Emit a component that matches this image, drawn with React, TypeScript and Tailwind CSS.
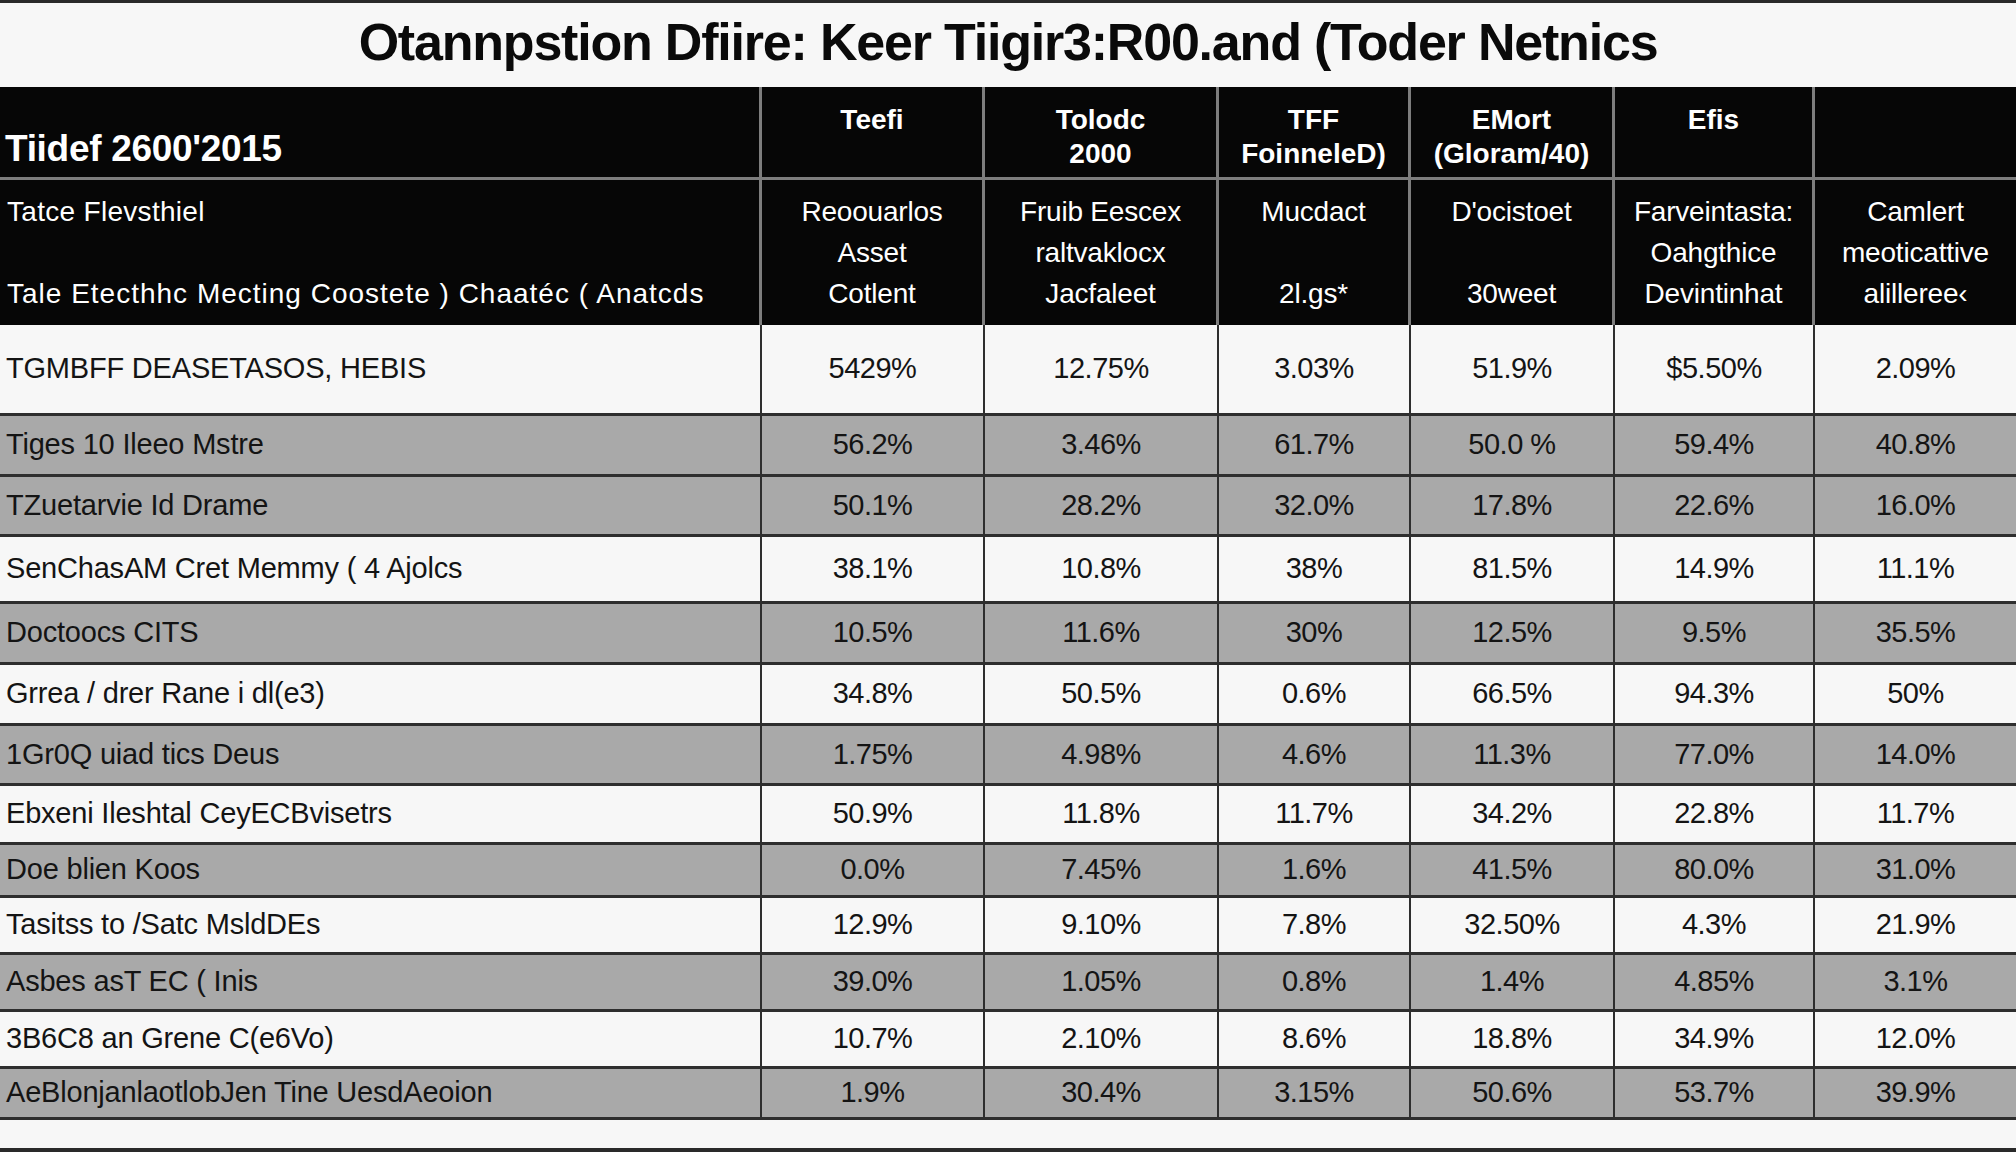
import React from "react";

const COLS = ["w-[762px]", "w-[223px]", "w-[234px]", "w-[192px]", "w-[204px]", "w-[200px]", "flex-1"];

const rows: { label: string; vals: string[]; h: string; gray: boolean }[] = [
  { label: "TGMBFF DEASETASOS, HEBIS", vals: ["5429%", "12.75%", "3.03%", "51.9%", "$5.50%", "2.09%"], h: "h-[91px]", gray: false },
  { label: "Tiges 10 Ileeo Mstre", vals: ["56.2%", "3.46%", "61.7%", "50.0 %", "59.4%", "40.8%"], h: "h-[61px]", gray: true },
  { label: "TZuetarvie Id Drame", vals: ["50.1%", "28.2%", "32.0%", "17.8%", "22.6%", "16.0%"], h: "h-[60px]", gray: true },
  { label: "SenChasAM Cret Memmy ( 4 Ajolcs", vals: ["38.1%", "10.8%", "38%", "81.5%", "14.9%", "11.1%"], h: "h-[67px]", gray: false },
  { label: "Doctoocs CITS", vals: ["10.5%", "11.6%", "30%", "12.5%", "9.5%", "35.5%"], h: "h-[61px]", gray: true },
  { label: "Grrea / drer Rane i dl(e3)", vals: ["34.8%", "50.5%", "0.6%", "66.5%", "94.3%", "50%"], h: "h-[61px]", gray: false },
  { label: "1Gr0Q uiad  tics Deus", vals: ["1.75%", "4.98%", "4.6%", "11.3%", "77.0%", "14.0%"], h: "h-[60px]", gray: true },
  { label: "Ebxeni Ileshtal CeyECBvisetrs", vals: ["50.9%", "11.8%", "11.7%", "34.2%", "22.8%", "11.7%"], h: "h-[59px]", gray: false },
  { label: "Doe blien Koos", vals: ["0.0%", "7.45%", "1.6%", "41.5%", "80.0%", "31.0%"], h: "h-[53px]", gray: true },
  { label: "Tasitss to /Satc MsldDEs", vals: ["12.9%", "9.10%", "7.8%", "32.50%", "4.3%", "21.9%"], h: "h-[57px]", gray: false },
  { label: "Asbes asT EC ( Inis", vals: ["39.0%", "1.05%", "0.8%", "1.4%", "4.85%", "3.1%"], h: "h-[57px]", gray: true },
  { label: "3B6C8 an Grene C(e6Vo)", vals: ["10.7%", "2.10%", "8.6%", "18.8%", "34.9%", "12.0%"], h: "h-[57px]", gray: false },
  { label: "AeBlonjanlaotlobJen Tine UesdAeoion", vals: ["1.9%", "30.4%", "3.15%", "50.6%", "53.7%", "39.9%"], h: "h-[51px]", gray: true },
];

const head1: string[][] = [
  ["Teefi", ""],
  ["Tolodc", "2000"],
  ["TFF", "FoinneleD)"],
  ["EMort", "(Gloram/40)"],
  ["Efis", ""],
  ["", ""],
];

const head2: string[][] = [
  ["Reoouarlos", "Asset", "Cotlent"],
  ["Fruib Eescex", "raltvaklocx", "Jacfaleet"],
  ["Mucdact", "", "2l.gs*"],
  ["D'ocistoet", "", "30weet"],
  ["Farveintasta:", "Oahgthice", "Devintinhat"],
  ["Camlert", "meoticattive", "alilleree‹"],
];

export default function App() {
  return (
    <div className="w-[2016px] h-[1152px] bg-[#f7f7f7] flex flex-col border-t-[3px] border-b-[4px] border-[#2a2a2a] font-['Liberation_Sans',Arial,sans-serif] overflow-hidden">
      <div className="h-[84px] flex items-center justify-center pb-[6px]">
        <h1 className="text-[52px] font-bold tracking-[-1.2px] text-[#0a0a0a] leading-none">
          Otannpstion Dfiire: Keer Tiigir3:R00.and (Toder Netnics
        </h1>
      </div>

      <div className="bg-[#060606] text-white">
        <div className="flex h-[93px] border-b-[3px] border-[#7d7d7d]">
          <div className={`${COLS[0]} border-r-[3px] border-[#7d7d7d] flex items-end pb-[8px] pl-[5px]`}>
            <span className="text-[37px] font-bold leading-[40px] tracking-[-0.3px]">Tiidef 2600'2015</span>
          </div>
          {head1.map((lines, i) => (
            <div
              key={i}
              className={`${COLS[i + 1]} ${i < 5 ? "border-r-[3px] border-[#7d7d7d]" : ""} flex flex-col items-center pt-[16px] text-[28px] font-bold leading-[34px]`}
            >
              {lines.map((l, j) => (
                <span key={j} className="h-[34px]">{l}</span>
              ))}
            </div>
          ))}
        </div>
        <div className="flex h-[145px]">
          <div className={`${COLS[0]} border-r-[3px] border-[#7d7d7d] flex flex-col justify-center pl-[7px] text-[28px] leading-[41px]`}>
            <span className="h-[41px] tracking-[0.3px]">Tatce Flevsthiel</span>
            <span className="h-[41px]"></span>
            <span className="h-[41px] tracking-[1px]">Tale Etecthhc Mecting Coostete ) Chaatéc ( Anatcds</span>
          </div>
          {head2.map((lines, i) => (
            <div
              key={i}
              className={`${COLS[i + 1]} ${i < 5 ? "border-r-[3px] border-[#7d7d7d]" : ""} flex flex-col items-center justify-center text-[28px] leading-[41px] tracking-[-0.2px]`}
            >
              {lines.map((l, j) => (
                <span key={j} className="h-[41px]">{l}</span>
              ))}
            </div>
          ))}
        </div>
      </div>

      <div className="flex flex-col text-[#141414]">
        {rows.map((r, i) => (
          <div
            key={i}
            className={`flex ${r.h} border-b-[3px] border-[#2e2e2e] ${r.gray ? "bg-[#a9a9a9]" : "bg-[#f7f7f7]"}`}
          >
            <div className={`${COLS[0]} border-r-[2px] border-[#2e2e2e] flex items-center pl-[6px] text-[29px] tracking-[-0.2px]`}>
              {r.label}
            </div>
            {r.vals.map((v, j) => (
              <div
                key={j}
                className={`${COLS[j + 1]} ${j < 5 ? "border-r-[2px] border-[#2e2e2e]" : ""} flex items-center justify-center text-[29px] tracking-[-0.5px]`}
              >
                {v}
              </div>
            ))}
          </div>
        ))}
      </div>
    </div>
  );
}
